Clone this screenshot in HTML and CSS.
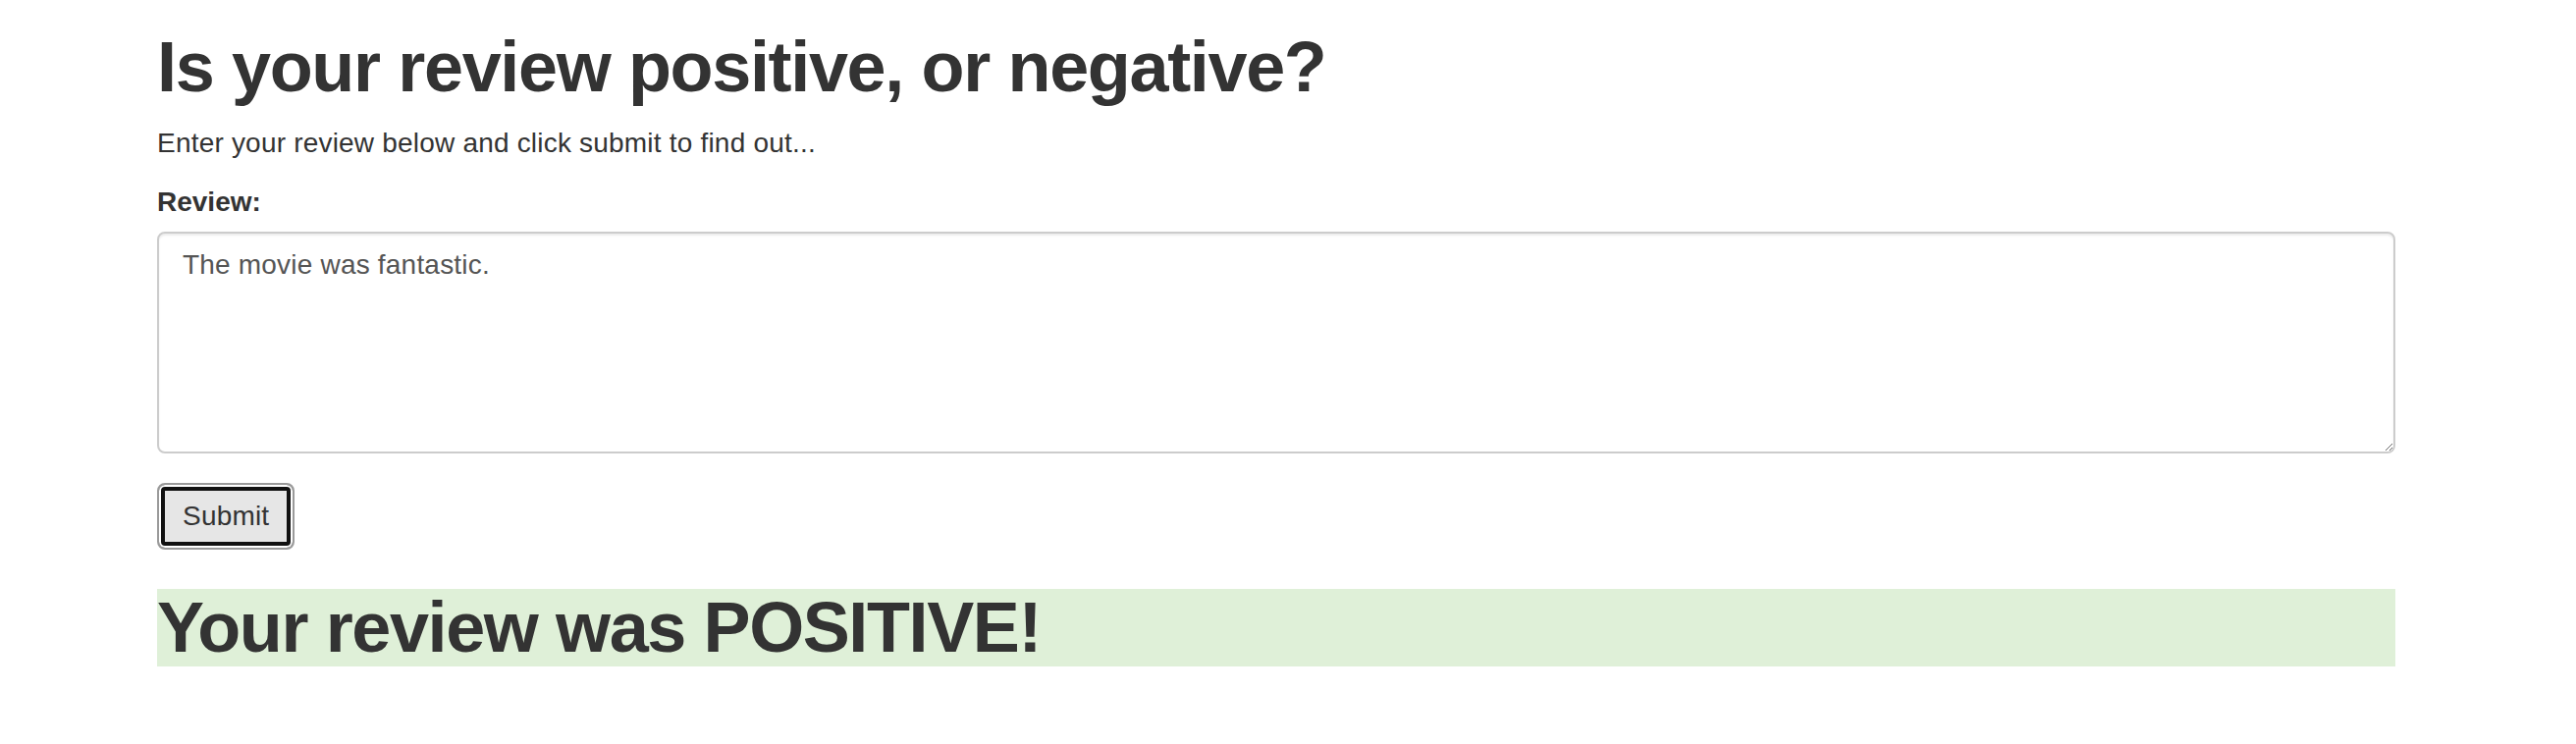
FILE: index.html
```html
<!DOCTYPE html>
<html lang="en">
<head>
<meta charset="utf-8">
<title>Sentiment</title>
<link rel="stylesheet" href="styles.css">
</head>
<body>
<div class="container">
  <h1 class="title">Is your review positive, or negative?</h1>
  <p class="lead-text">Enter your review below and click submit to find out...</p>
  <form class="review-form">
    <div class="form-group">
      <label class="field-label" for="review">Review:</label>
      <textarea class="form-control" id="review" name="review">The movie was fantastic.</textarea>
    </div>
    <button type="button" class="btn">Submit</button>
  </form>
  <h1 class="result">Your review was POSITIVE!</h1>
</div>
</body>
</html>
```
FILE: styles.css
```css
html, body {
  margin: 0;
  padding: 0;
  background: #fff;
}
body {
  font-family: "Liberation Sans", Arial, Helvetica, sans-serif;
  font-size: 28px;
  line-height: 40px;
  color: #333;
}
.container {
  padding: 0 184px 0 160px;
}
.title {
  margin: 29px 0 18px;
  font-size: 72px;
  line-height: 79px;
  font-weight: bold;
  letter-spacing: -1.35px;
}
.lead-text {
  margin: 0 0 20px;
  letter-spacing: 0.2px;
}
.form-group {
  margin-bottom: 30px;
}
.field-label {
  display: block;
  font-weight: bold;
  margin-bottom: 10px;
}
.form-control {
  display: block;
  box-sizing: border-box;
  width: 100%;
  height: 226px;
  margin: 0;
  padding: 12px 24px;
  border: 2px solid #ccc;
  border-radius: 8px;
  box-shadow: inset 0 2px 2px rgba(0, 0, 0, 0.075);
  font-family: "Liberation Sans", Arial, Helvetica, sans-serif;
  font-size: 28px;
  line-height: 40px;
  letter-spacing: 0.2px;
  color: #555;
  background: #fff;
  resize: vertical;
  outline: none;
}
.btn {
  display: block;
  box-sizing: border-box;
  height: 68px;
  padding: 12px 24px;
  margin: 0;
  border: 2px solid #9a9a9a;
  border-radius: 8px;
  background: #e6e6e6;
  box-shadow: inset 0 0 0 2px #fff, inset 0 0 0 6px #111;
  font-family: "Liberation Sans", Arial, Helvetica, sans-serif;
  font-size: 28px;
  line-height: 40px;
  letter-spacing: 0.2px;
  color: #333;
}
.result {
  margin: 40px 0 0;
  font-size: 72px;
  line-height: 79px;
  font-weight: bold;
  letter-spacing: -1.4px;
  background: #dff0d8;
}
```
